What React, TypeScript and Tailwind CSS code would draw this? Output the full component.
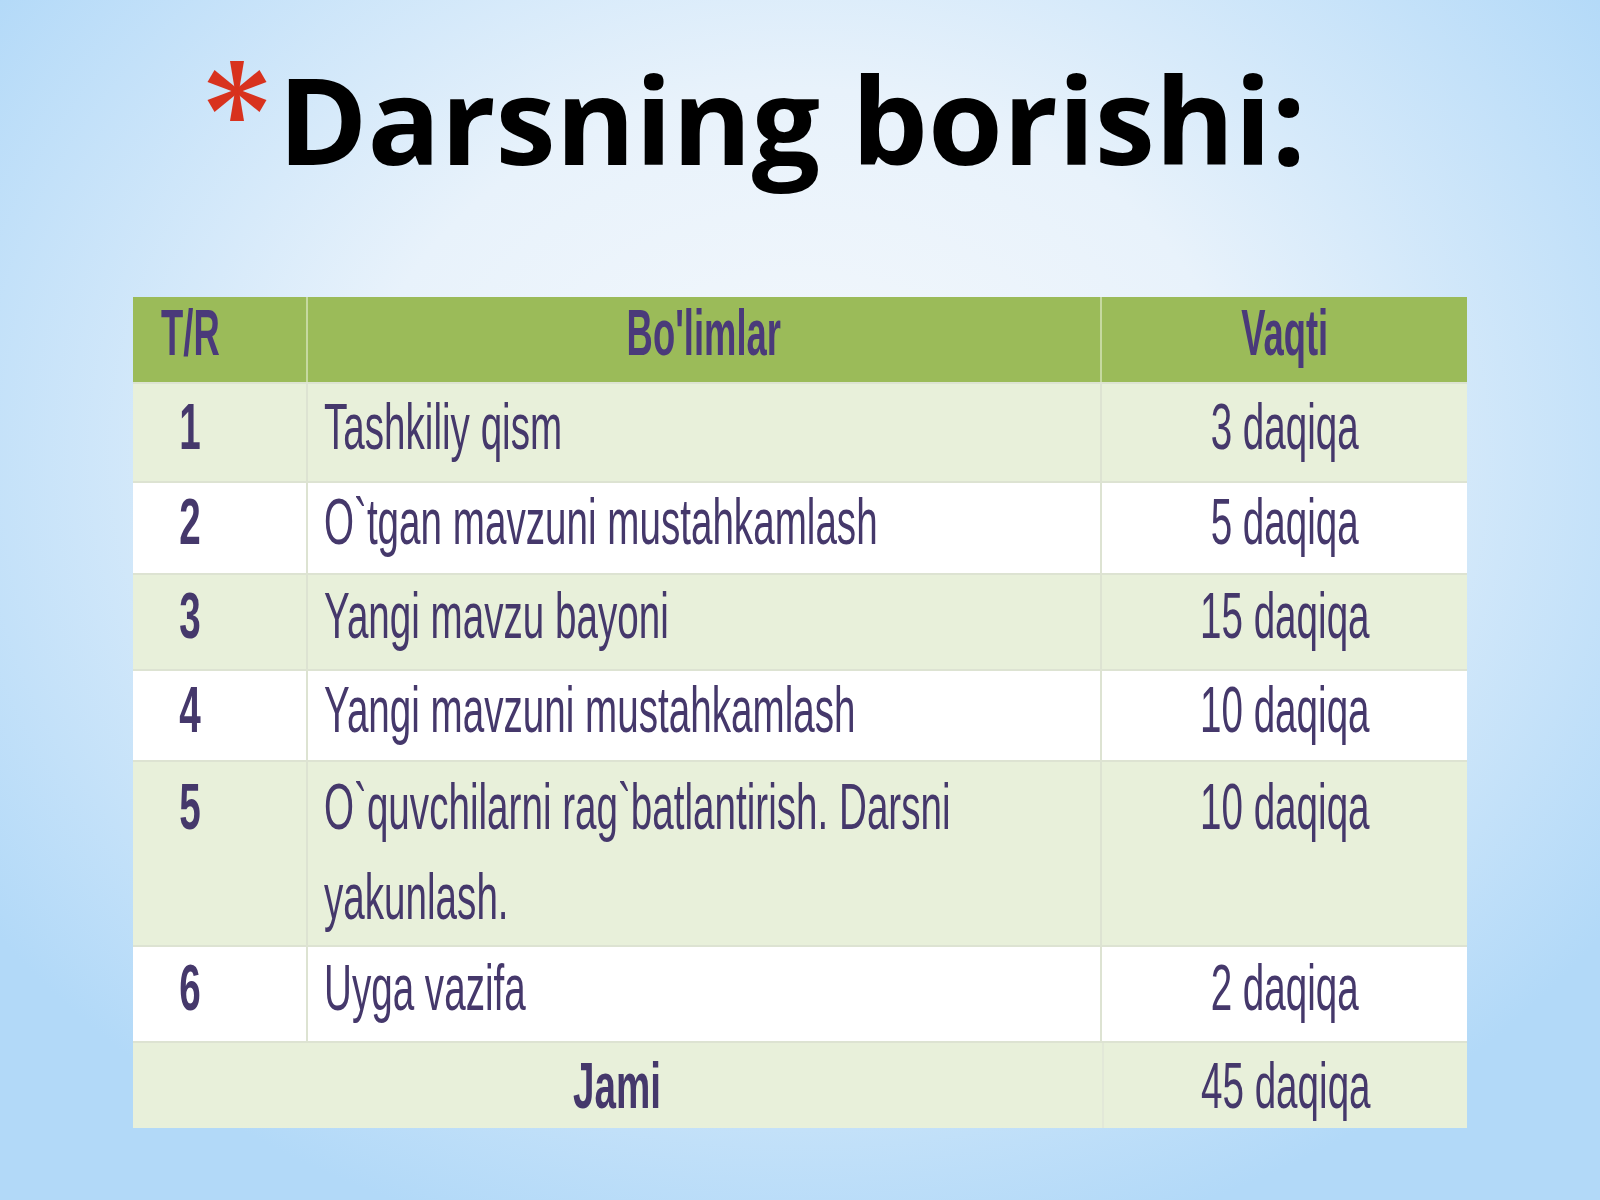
import React from 'react';

type Row = {
  n: string;
  title: React.ReactNode;
  time: string;
  h: string;
  bg: string;
  tall?: boolean;
};

const rows: Row[] = [
  { n: '1', title: 'Tashkiliy qism', time: '3 daqiqa', h: 'h-[99px]', bg: 'bg-[#e8f0da]' },
  { n: '2', title: 'O`tgan mavzuni mustahkamlash', time: '5 daqiqa', h: 'h-[92px]', bg: 'bg-white' },
  { n: '3', title: 'Yangi mavzu bayoni', time: '15 daqiqa', h: 'h-[96px]', bg: 'bg-[#e8f0da]' },
  { n: '4', title: 'Yangi mavzuni mustahkamlash', time: '10 daqiqa', h: 'h-[91px]', bg: 'bg-white' },
  {
    n: '5',
    title: (
      <>
        <span className="block">O`quvchilarni rag`batlantirish. Darsni</span>
        <span className="block">yakunlash.</span>
      </>
    ),
    time: '10 daqiqa',
    h: 'h-[185px]',
    bg: 'bg-[#e8f0da]',
    tall: true,
  },
  { n: '6', title: 'Uyga vazifa', time: '2 daqiqa', h: 'h-[96px]', bg: 'bg-white' },
];

// slide text is a narrow face stretched tall; squeeze Liberation Sans sideways
const Txt: React.FC<{ children: React.ReactNode; className?: string }> = ({ children, className }) => (
  <span className={`inline-block whitespace-nowrap ${className ?? 'origin-center scale-x-[0.594]'}`}>{children}</span>
);

const Arm = () => <path d="M28 0 L42 0 L37 30 L33 30 Z" />;

const Asterisk = () => (
  <svg width="70" height="62" viewBox="0 0 70 62" className="mt-[22px] mr-[6px] shrink-0">
    <g fill="#d8321e" transform="translate(0 1)">
      <Arm />
      <g transform="rotate(180 35 30)"><Arm /></g>
      <g transform="rotate(60 35 30)"><Arm /></g>
      <g transform="rotate(120 35 30)"><Arm /></g>
      <g transform="rotate(-60 35 30)"><Arm /></g>
      <g transform="rotate(-120 35 30)"><Arm /></g>
    </g>
  </svg>
);

const App: React.FC = () => {
  return (
    <div className="w-[1600px] h-[1200px] overflow-hidden bg-[radial-gradient(ellipse_62%_68%_at_50%_38%,#f4f8fc_0%,#e8f2fb_45%,#b2d9f8_100%)]">
      {/* title */}
      <div className="flex items-start pl-[202px] pt-[38px] h-[297px]">
        <Asterisk />
        <h1 className="text-[121px] leading-[160px] font-bold text-black font-['Open_Sans',sans-serif]">
          Darsning borishi:
        </h1>
      </div>

      {/* table */}
      <div className="ml-[133px] w-[1334px] text-[65px] text-[#45386b] font-['Liberation_Sans',Arial,sans-serif]">
        <div className="flex h-[85px] bg-[#9bbb59] text-[#4a3a7a] font-bold">
          <div className="w-[173px] flex items-center justify-center pr-[58px] pb-[14px]">
            <Txt className="origin-center scale-x-[0.56]">T/R</Txt>
          </div>
          <div className="w-[794px] border-l-2 border-[#c6d9a0] flex items-center justify-center pb-[14px]">
            <Txt className="origin-center scale-x-[0.56]">Bo'limlar</Txt>
          </div>
          <div className="flex-1 border-l-2 border-[#c6d9a0] flex items-center justify-center pb-[14px]">
            <Txt className="origin-center scale-x-[0.56]">Vaqti</Txt>
          </div>
        </div>

        {rows.map((r) => (
          <div key={r.n} className={`flex ${r.h} ${r.bg} border-t-2 border-[#dde3d2]`}>
            <div
              className={`w-[173px] flex justify-center pr-[58px] font-bold ${r.tall ? 'items-start' : 'items-center pb-[12px]'}`}
            >
              <Txt className="origin-center scale-x-[0.594] leading-[90px]">{r.n}</Txt>
            </div>
            <div
              className={`w-[794px] min-w-0 border-l-2 border-[#dde3d2] pl-[16px] flex ${r.tall ? 'items-start' : 'items-center pb-[12px]'}`}
            >
              <Txt className="origin-left scale-x-[0.594] leading-[90px]">{r.title}</Txt>
            </div>
            <div
              className={`flex-1 border-l-2 border-[#dde3d2] flex justify-center ${r.tall ? 'items-start' : 'items-center pb-[12px]'}`}
            >
              <Txt className="origin-center scale-x-[0.594] leading-[90px]">{r.time}</Txt>
            </div>
          </div>
        ))}

        <div className="flex h-[87px] bg-[#e8f0da] border-t-2 border-[#dde3d2]">
          <div className="w-[969px] flex items-center justify-center font-bold">
            <Txt>Jami</Txt>
          </div>
          <div className="flex-1 border-l-2 border-[#e2e8d8] flex items-center justify-center">
            <Txt>45 daqiqa</Txt>
          </div>
        </div>
      </div>
    </div>
  );
};

export default App;
